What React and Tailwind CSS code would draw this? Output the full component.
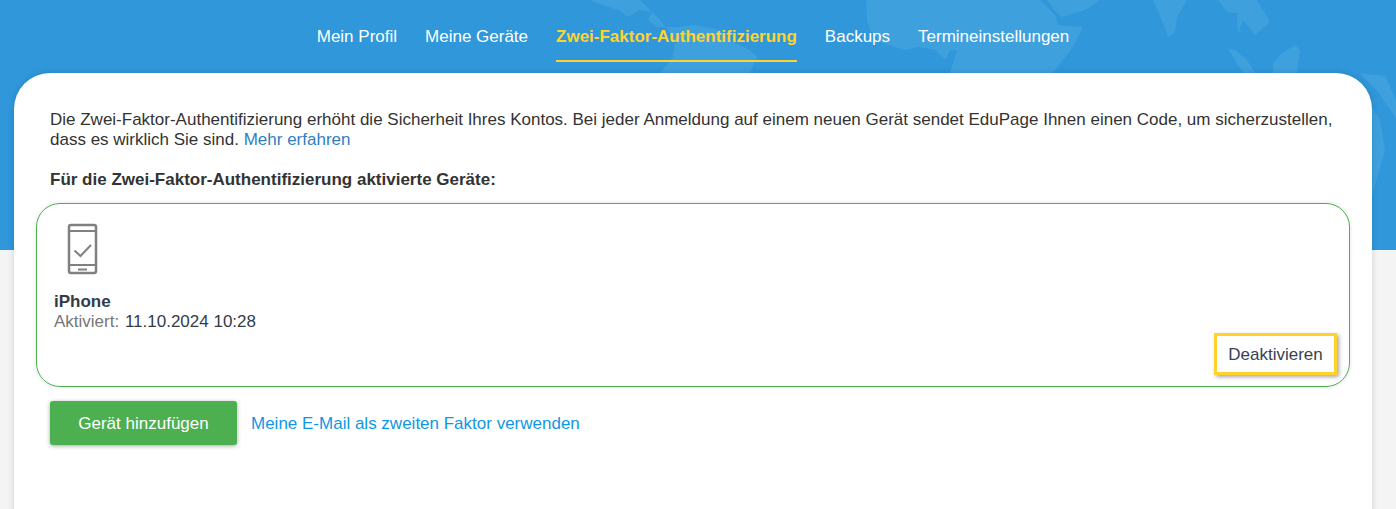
const tabs = [
  { label: "Mein Profil" },
  { label: "Meine Geräte" },
  { label: "Zwei-Faktor-Authentifizierung", active: true },
  { label: "Backups" },
  { label: "Termineinstellungen" },
];

const blobs = [
  "M589 0 L620 11 L628 17 L640 10 L652 12 L648 20 L657 27 L677 27 L695 25 L720 30 L733 42 L750 50 L757 57 L750 73 L660 73 L673 57 L675 43 L668 30 L660 20 L650 10 L640 0 Z",
  "M866 0 L867 20 L870 30 L880 42 L895 47 L905 50 L918 47 L935 50 L945 60 L950 50 L957 50 L950 73 L1053 73 L1073 47 L1083 27 L1058 25 L1055 15 L1040 0 Z",
  "M1047 0 L1100 0 L1085 10 L1062 17 L1057 13 Z",
  "M1153 0 L1163 23 L1168 37 L1175 33 L1177 17 L1187 0 Z",
  "M1218 0 L1227 12 L1237 13 L1238 35 L1243 20 L1255 35 L1270 22 L1257 0 Z",
  "M1228 49 L1235 50 L1247 60 L1255 73 L1243 73 Z",
  "M1273 63 L1282 53 L1295 45 L1300 50 L1298 63 L1297 73 L1273 73 Z",
  "M1360 73 L1385 76 L1396 100 L1396 118 L1378 92 Z",
  "M1372 108 L1380 120 L1385 150 L1372 196 Z",
];

export default function App() {
  return (
    <div
      className="relative h-[509px] overflow-hidden bg-[linear-gradient(#2f97da_250px,#f4f4f4_250px)] text-[17px] leading-[20px] text-[#333333]"
      style={{ fontFamily: '"Liberation Sans", Arial, sans-serif' }}
    >
      <svg className="absolute left-0 top-0" width="1396" height="250" viewBox="0 0 1396 250" aria-hidden="true">
        {blobs.map((d) => (
          <path key={d} d={d} fill="#3fa0de" />
        ))}
      </svg>

      <div className="relative pr-[10px]">
        <nav className="flex h-[73px] justify-center gap-[28px] pt-[13px]">
          {tabs.map((t) => (
            <a
              key={t.label}
              className={
                t.active
                  ? "h-[49px] border-b-2 border-[#ffd22e] pt-[14px] font-bold text-[#ffd22e]"
                  : "h-[49px] pt-[14px] text-white"
              }
            >
              {t.label}
            </a>
          ))}
        </nav>

        <main className="mx-[14px] h-[500px] rounded-t-[36px] bg-white px-[22px] pt-[37px] shadow-[0_0_6px_rgba(0,0,0,0.15)]">
          <p className="px-[14px]">
            Die Zwei-Faktor-Authentifizierung erhöht die Sicherheit Ihres Kontos. Bei jeder Anmeldung auf einem neuen Gerät sendet EduPage Ihnen einen Code, um sicherzustellen, dass es wirklich Sie sind.{" "}
            <a className="text-[#2f7fc1]">Mehr erfahren</a>
          </p>
          <h2 className="mt-[20px] px-[14px] font-bold">Für die Zwei-Faktor-Authentifizierung aktivierte Geräte:</h2>

          <section className="mt-[13px] h-[184px] rounded-[24px] border border-[#4caf50] px-[17px] pt-[19px] shadow-[0_0_4px_rgba(0,0,0,0.12)]">
            <svg className="ml-[13px] block" width="31" height="52" viewBox="0 0 31 52" fill="none" stroke="#808080" strokeWidth="2.5" aria-hidden="true">
              <rect x="2" y="2" width="27" height="48" rx="2" />
              <path d="M2 8h27M2 42h27" strokeWidth="2" />
              <path d="M11 46.5h9" strokeWidth="2" />
              <path d="M7.5 27.5l6 5.5L24 22" strokeWidth="2" />
            </svg>
            <div className="mt-[17px] font-bold text-[#333b48]">iPhone</div>
            <div className="text-[#777777]">
              Aktiviert: <span className="ml-[1px] text-[#333b48]">11.10.2024 10:28</span>
            </div>
            <div className="mt-[1px] flex justify-end">
              <button className="-mr-[5px] h-[42px] w-[123px] border-[3px] border-[#ffd22e] bg-white pt-[2px] text-[17px] text-[#3a4150] shadow-[2px_2px_4px_rgba(0,0,0,0.35)]">
                Deaktivieren
              </button>
            </div>
          </section>

          <div className="mt-[14px] flex items-center px-[14px]">
            <button className="h-[44px] w-[187px] rounded-[3px] bg-[#4caf50] pt-[2px] text-[17px] text-white shadow-[0_1px_4px_rgba(0,0,0,0.35)]">
              Gerät hinzufügen
            </button>
            <a className="ml-[14px] pt-[2px] text-[#0f97e6]">Meine E-Mail als zweiten Faktor verwenden</a>
          </div>
        </main>
      </div>
    </div>
  );
}
